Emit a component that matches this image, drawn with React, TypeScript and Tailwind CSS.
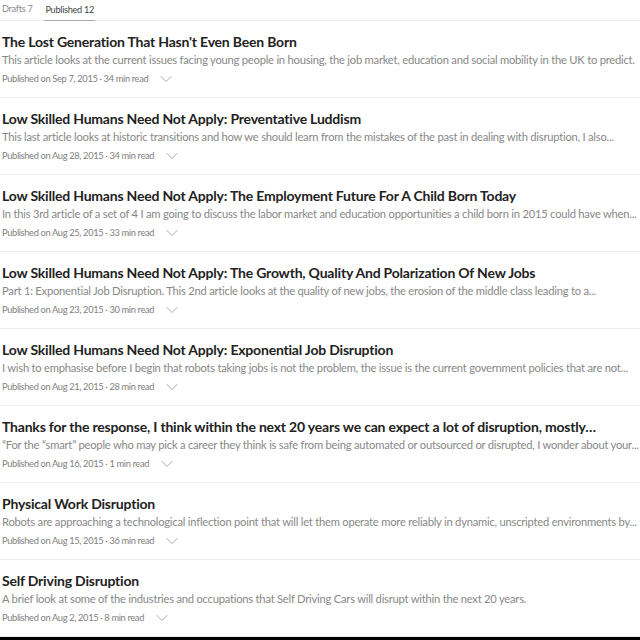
import { ChevronDown } from "lucide-react";

const posts = [
  {
    title: "The Lost Generation That Hasn't Even Been Born",
    desc: "This article looks at the current issues facing young people in housing, the job market, education and social mobility in the UK to predict.",
    meta: "Published on Sep 7, 2015 · 34 min read",
  },
  {
    title: "Low Skilled Humans Need Not Apply: Preventative Luddism",
    desc: "This last article looks at historic transitions and how we should learn from the mistakes of the past in dealing with disruption, I also...",
    meta: "Published on Aug 28, 2015 · 34 min read",
  },
  {
    title: "Low Skilled Humans Need Not Apply: The Employment Future For A Child Born Today",
    desc: "In this 3rd article of a set of 4 I am going to discuss the labor market and education opportunities a child born in 2015 could have when...",
    meta: "Published on Aug 25, 2015 · 33 min read",
  },
  {
    title: "Low Skilled Humans Need Not Apply: The Growth, Quality And Polarization Of New Jobs",
    desc: "Part 1: Exponential Job Disruption. This 2nd article looks at the quality of new jobs, the erosion of the middle class leading to a...",
    meta: "Published on Aug 23, 2015 · 30 min read",
  },
  {
    title: "Low Skilled Humans Need Not Apply: Exponential Job Disruption",
    desc: "I wish to emphasise before I begin that robots taking jobs is not the problem, the issue is the current government policies that are not...",
    meta: "Published on Aug 21, 2015 · 28 min read",
  },
  {
    title: "Thanks for the response, I think within the next 20 years we can expect a lot of disruption, mostly…",
    desc: "\u201cFor the \u201csmart\u201d people who may pick a career they think is safe from being automated or outsourced or disrupted, I wonder about your...",
    meta: "Published on Aug 16, 2015 · 1 min read",
  },
  {
    title: "Physical Work Disruption",
    desc: "Robots are approaching a technological inflection point that will let them operate more reliably in dynamic, unscripted environments by...",
    meta: "Published on Aug 15, 2015 · 36 min read",
  },
  {
    title: "Self Driving Disruption",
    desc: "A brief look at some of the industries and occupations that Self Driving Cars will disrupt within the next 20 years.",
    meta: "Published on Aug 2, 2015 · 8 min read",
  },
];

export default function App() {
  return (
    <div className="h-screen bg-black font-['Lato',sans-serif]">
      <div className="h-[637px] bg-white overflow-hidden">
        {/* Tabs */}
        <div className="flex items-end h-[21px] border-b border-[#ececec] text-[9.2px] tracking-[-0.3px]">
          <div className="pl-[2px] pr-[12px] h-[21px] leading-[19px] text-[#8a8a8a]">Drafts 7</div>
          <div className="px-[1px] h-[21px] leading-[19px] text-[#444] border-b border-[#aaaaaa] -mb-px">Published 12</div>
        </div>

        {posts.map((p) => (
          <div key={p.meta} className="border-b border-[#ececec] pt-[11px] pb-[10px] px-[2px]">
            <div className="text-[14px] leading-[20px] font-bold text-[#222] tracking-[-0.2px] whitespace-nowrap">
              {p.title}
            </div>
            <div className="text-[11.2px] leading-[16px] text-[#888] tracking-[-0.23px] whitespace-nowrap">
              {p.desc}
            </div>
            <div className="mt-[3px] flex items-center h-[16px] text-[9.3px] text-[#808080] tracking-[-0.35px] whitespace-nowrap">
              <span>{p.meta}</span>
              <ChevronDown className="ml-[8px] w-[20px] h-[20px] text-[#999]" strokeWidth={1} />
            </div>
          </div>
        ))}
      </div>
    </div>
  );
}
